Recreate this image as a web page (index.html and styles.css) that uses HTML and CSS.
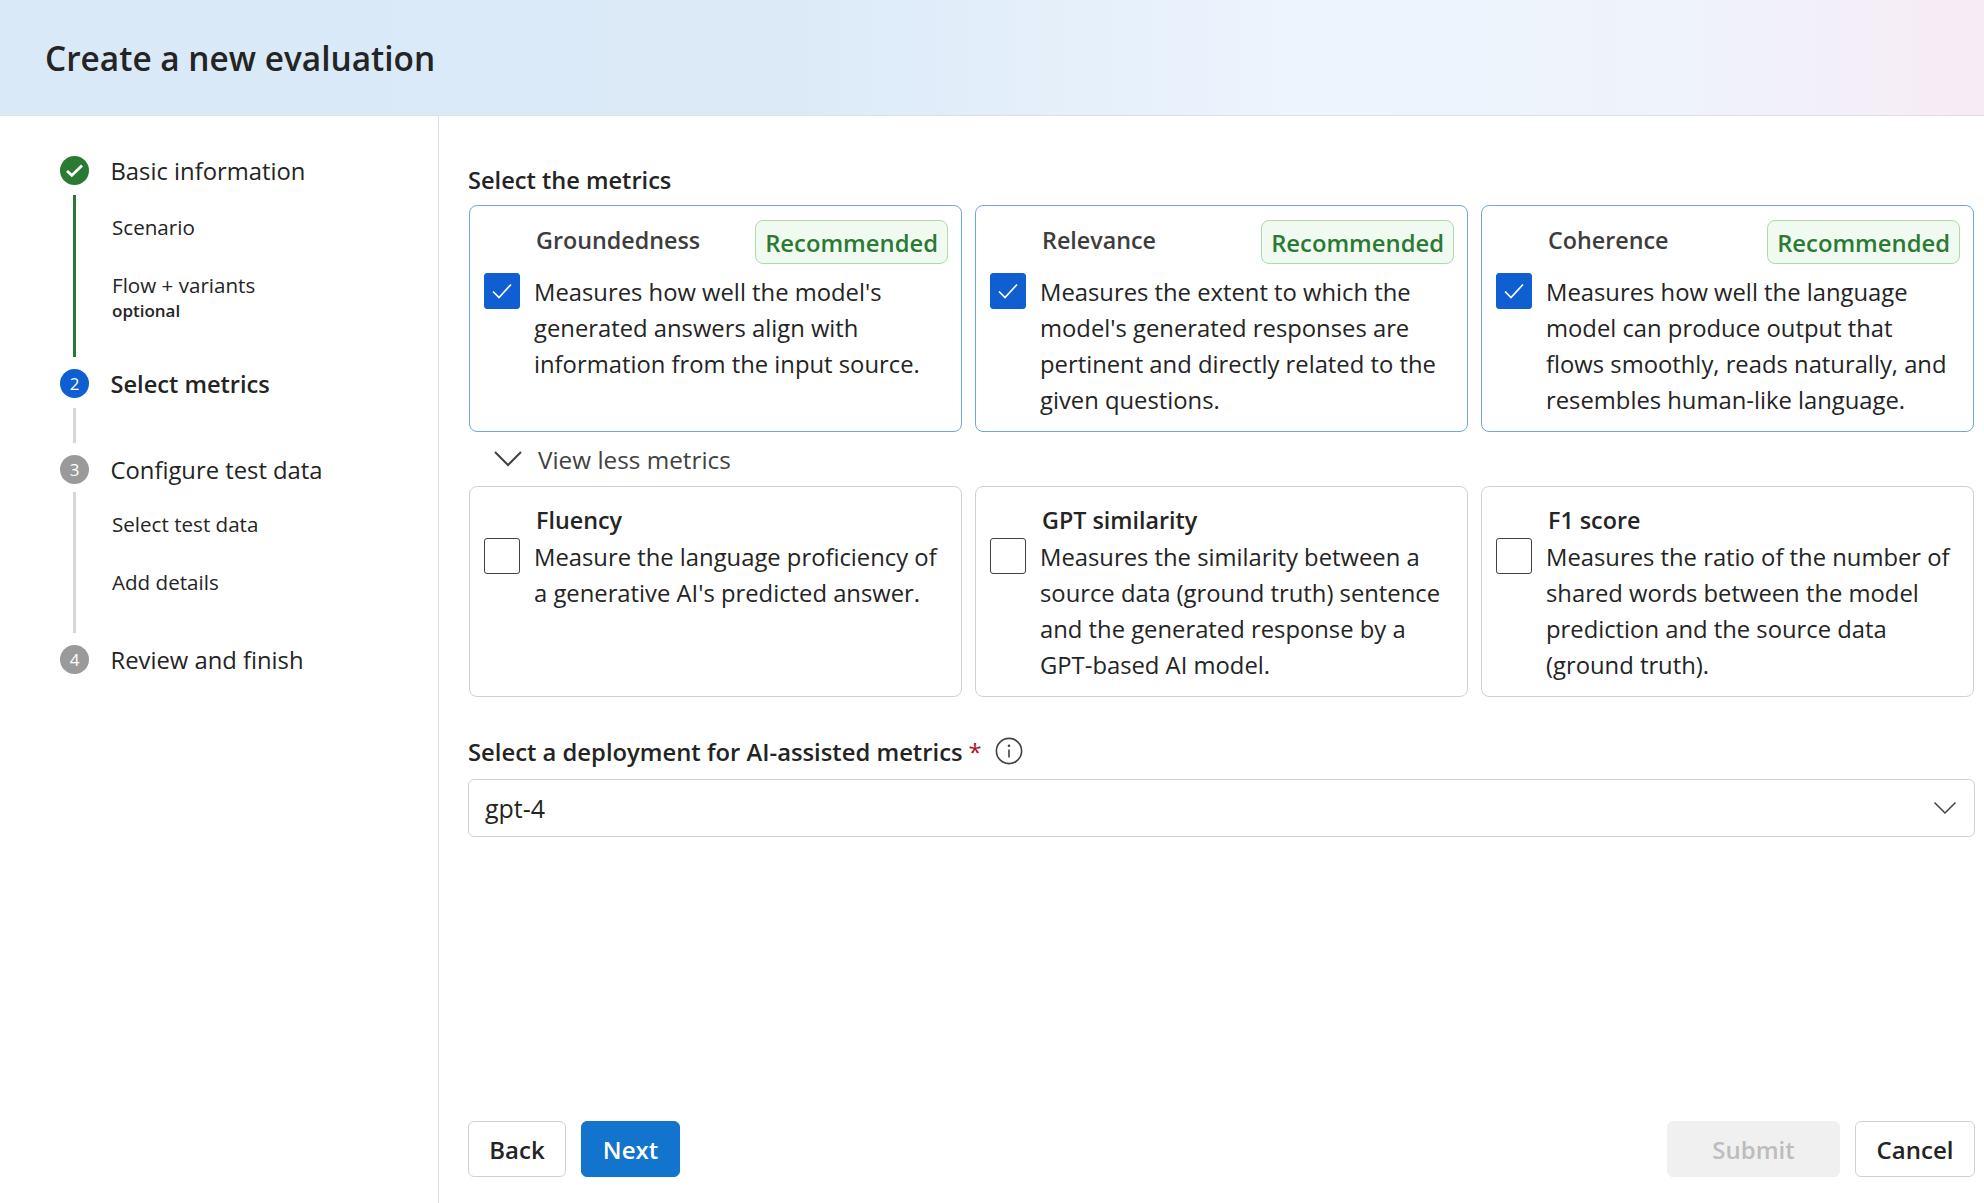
FILE: index.html
```html
<!DOCTYPE html>
<html lang="en">
<head>
  <meta charset="UTF-8">
  <title>Create a new evaluation</title>
  <link rel="stylesheet" href="styles.css">
</head>
<body>
  <header class="top">
    <h1>Create a new evaluation</h1>
  </header>

  <div class="layout">
    <aside class="side">
      <div class="step">
        <span class="dot dot-done">
          <svg width="19" height="15" viewBox="0 0 19 15"><path d="M2 8l4.8 4.4L17 2.5" fill="none" stroke="#fff" stroke-width="2.8"/></svg>
        </span>
        <span class="step-name">Basic information</span>
      </div>
      <div class="sub sub-done">
        <div class="sub-item sub-first">Scenario</div>
        <div class="sub-item sub-flow">Flow + variants<small>optional</small></div>
      </div>

      <div class="step">
        <span class="dot dot-now">2</span>
        <span class="step-name step-now">Select metrics</span>
      </div>
      <div class="sub sub-short"></div>

      <div class="step">
        <span class="dot">3</span>
        <span class="step-name">Configure test data</span>
      </div>
      <div class="sub sub-test">
        <div class="sub-item sub-first">Select test data</div>
        <div class="sub-item sub-add">Add details</div>
      </div>

      <div class="step">
        <span class="dot">4</span>
        <span class="step-name">Review and finish</span>
      </div>
    </aside>

    <main class="main">
      <div class="field-label metrics-label">Select the metrics</div>

      <div class="cards cards-on">
        <div class="card card-on">
          <div class="card-head">
            <span class="card-title">Groundedness</span>
            <span class="badge">Recommended</span>
          </div>
          <span class="box box-on"><svg width="22" height="18" viewBox="0 0 22 18"><path d="M2 9.5l6 6L20 2.5" fill="none" stroke="#fff" stroke-width="1.7"/></svg></span>
          <p class="card-text">Measures how well the model's generated answers align with information from the input source.</p>
        </div>
        <div class="card card-on">
          <div class="card-head">
            <span class="card-title">Relevance</span>
            <span class="badge">Recommended</span>
          </div>
          <span class="box box-on"><svg width="22" height="18" viewBox="0 0 22 18"><path d="M2 9.5l6 6L20 2.5" fill="none" stroke="#fff" stroke-width="1.7"/></svg></span>
          <p class="card-text">Measures the extent to which the model's generated responses are pertinent and directly related to the given questions.</p>
        </div>
        <div class="card card-on">
          <div class="card-head">
            <span class="card-title">Coherence</span>
            <span class="badge">Recommended</span>
          </div>
          <span class="box box-on"><svg width="22" height="18" viewBox="0 0 22 18"><path d="M2 9.5l6 6L20 2.5" fill="none" stroke="#fff" stroke-width="1.7"/></svg></span>
          <p class="card-text">Measures how well the language model can produce output that flows smoothly, reads naturally, and resembles human-like language.</p>
        </div>
      </div>

      <div class="toggle">
        <svg width="30" height="18" viewBox="0 0 30 18"><path d="M2 2l13 13L28 2" fill="none" stroke="#424242" stroke-width="2"/></svg>
        <span>View less metrics</span>
      </div>

      <div class="cards cards-off">
        <div class="card card-off">
          <div class="card-head"><span class="card-title card-title-off">Fluency</span></div>
          <span class="box"></span>
          <p class="card-text">Measure the language proficiency of a generative AI's predicted answer.</p>
        </div>
        <div class="card card-off">
          <div class="card-head"><span class="card-title card-title-off">GPT similarity</span></div>
          <span class="box"></span>
          <p class="card-text">Measures the similarity between a source data (ground truth) sentence and the generated response by a GPT-based AI model.</p>
        </div>
        <div class="card card-off">
          <div class="card-head"><span class="card-title card-title-off">F1 score</span></div>
          <span class="box"></span>
          <p class="card-text">Measures the ratio of the number of shared words between the model prediction and the source data (ground truth).</p>
        </div>
      </div>

      <div class="field-label deploy-label">
        <span>Select a deployment for AI-assisted metrics</span>
        <span class="req">*</span>
        <svg class="info" width="28" height="28" viewBox="0 0 28 28"><circle cx="14" cy="14" r="12.6" fill="none" stroke="#424242" stroke-width="1.6"/><path d="M14 12.5v8" stroke="#424242" stroke-width="1.6"/><circle cx="14" cy="8.8" r="1.3" fill="#424242"/></svg>
      </div>

      <div class="select">
        <span>gpt-4</span>
        <svg width="24" height="14" viewBox="0 0 24 14"><path d="M1.5 1.5L12 12 22.5 1.5" fill="none" stroke="#424242" stroke-width="1.5"/></svg>
      </div>

      <div class="actions">
        <button class="btn">Back</button>
        <button class="btn btn-main">Next</button>
        <button class="btn btn-off">Submit</button>
        <button class="btn btn-cancel">Cancel</button>
      </div>
    </main>
  </div>
</body>
</html>
```

FILE: styles.css
```css
* {
  box-sizing: border-box;
}
html, body {
  height: 100%;
}
body {
  margin: 0;
  height: 1203px;
  overflow: hidden;
  background-color: #fff;
  color: #242424;
  font-family: "Open Sans", "Noto Sans", Arial, sans-serif;
  display: flex;
  flex-direction: column;
}

.top {
  height: 116px;
  flex: none;
  padding-left: 45px;
  display: flex;
  align-items: center;
  background: linear-gradient(90deg, #d9e9f7 0%, #dceaf8 40%, #ecf4fd 65%, #eff3fb 85%, #f7ebf5 100%);
  border-bottom: 1px solid #e0e0e0;
}
.top h1 {
  margin: 0;
  font-size: 33.4px;
  font-weight: 600;
}

.layout {
  flex: 1;
  display: flex;
  min-height: 0;
}

/* stepper */
.side {
  width: 439px;
  flex: none;
  padding: 40px 0 0 60px;
  border-right: 1px solid #e0e0e0;
}
.step {
  display: flex;
  align-items: center;
  height: 29px;
}
.dot {
  width: 29px;
  height: 29px;
  flex: none;
  border-radius: 50%;
  display: flex;
  align-items: center;
  justify-content: center;
  background-color: #9a9a9a;
  color: #fff;
  font-size: 17px;
}
.dot-done {
  background-color: #2b7a34;
}
.dot-now {
  background-color: #0f5ed2;
}
.step-name {
  margin-left: 21.5px;
  font-size: 23.8px;
  color: #242424;
}
.step-now {
  font-size: 23.6px;
  font-weight: 600;
}
.sub {
  margin: 10px 0 12px 13px;
  padding-left: 36px;
  border-left: 3px solid #d6d6d6;
  font-size: 20.6px;
}
.sub-done {
  height: 162px;
  border-left-color: #2b7a34;
}
.sub-short {
  height: 35px;
}
.sub-test {
  margin-top: 8px;
  height: 141px;
}
.sub-item {
  line-height: 28px;
}
.sub-first {
  padding-top: 18px;
}
.sub-flow {
  margin-top: 30px;
}
.sub-add {
  margin-top: 30px;
}
.sub-item small {
  display: block;
  font-size: 17px;
  font-weight: 600;
  line-height: 24px;
}

/* main column */
.main {
  flex: 1;
  min-width: 0;
  padding: 47px 9px 26px 29px;
  display: flex;
  flex-direction: column;
}
.field-label {
  font-size: 23.8px;
  font-weight: 600;
  line-height: 34px;
}
.metrics-label {
  margin-bottom: 8px;
  font-size: 23.6px;
}

.cards {
  display: grid;
  grid-template-columns: repeat(3, 1fr);
  gap: 13px;
  margin: 0 1px;
}
.card {
  display: grid;
  grid-template-columns: 36px 1fr;
  grid-template-rows: auto 1fr;
  column-gap: 14px;
  padding: 0 13px 0 14px;
  border-radius: 8px;
}
.card-on {
  height: 227px;
  border: 1.5px solid #6ea6e3;
}
.card-off {
  height: 211px;
  border: 1.5px solid #d1d1d1;
}
.card-head {
  grid-column: 2;
  display: flex;
  justify-content: space-between;
  align-items: flex-start;
}
.card-on .card-head {
  min-height: 67px;
  padding-top: 14px;
}
.card-off .card-head {
  min-height: 51px;
  padding-top: 18px;
}
.card-title {
  margin-left: 2px;
  font-size: 23.3px;
  font-weight: 600;
  line-height: 30px;
  color: #3d3d3d;
}
.card-on .card-title {
  padding-top: 5px;
}
.card-title-off {
  color: #242424;
}
.badge {
  height: 44px;
  padding: 1px 9px 0;
  display: flex;
  align-items: center;
  border: 1.5px solid #a9dca9;
  border-radius: 8px;
  background-color: #f1faf1;
  color: #2b7a34;
  font-size: 23.8px;
  font-weight: 600;
}
.box {
  grid-column: 1;
  grid-row: 2;
  width: 36px;
  height: 36px;
  display: flex;
  align-items: center;
  justify-content: center;
  border: 1.5px solid #424242;
  border-radius: 3px;
  background-color: #fff;
}
.box-on {
  border-color: #0f5ed2;
  background-color: #0f5ed2;
}
.card-text {
  grid-column: 2;
  grid-row: 2;
  margin: 0;
  padding: 1px 7px 0 0;
  font-size: 23.8px;
  line-height: 36px;
  color: #242424;
}

.toggle {
  height: 54px;
  padding-left: 25px;
  display: flex;
  align-items: center;
  gap: 15px;
  color: #424242;
  font-size: 24.3px;
  font-weight: 500;
}

.deploy-label {
  margin-top: 38px;
  display: flex;
  align-items: center;
}
.req {
  margin-left: 6px;
  color: #b10e1c;
  font-weight: 400;
}
.info {
  margin-left: 13px;
  margin-top: -3px;
}

.select {
  margin-top: 10px;
  height: 58px;
  padding: 0 17px 0 16px;
  display: flex;
  align-items: center;
  justify-content: space-between;
  border: 1.5px solid #d1d1d1;
  border-radius: 6px;
  font-size: 25px;
}

.actions {
  margin-top: auto;
  display: flex;
  gap: 15px;
}
.btn {
  height: 56px;
  width: 98px;
  padding: 0;
  border: 1.5px solid #d1d1d1;
  border-radius: 6px;
  background-color: #fff;
  color: #242424;
  font-family: inherit;
  font-size: 24px;
  font-weight: 600;
}
.btn-main {
  width: 99px;
  border-color: #1274cc;
  background-color: #1274cc;
  color: #fff;
}
.btn-off {
  margin-left: auto;
  width: 173px;
  border-color: #f0f0f0;
  background-color: #f0f0f0;
  color: #bdbdbd;
}
.btn-cancel {
  width: 120px;
}
```
